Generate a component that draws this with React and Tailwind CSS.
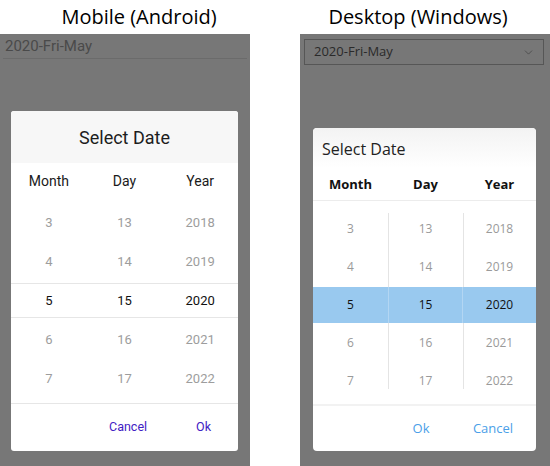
import { ChevronDown } from 'lucide-react';

const rows = [
  { m: 3, d: 13, y: 2018 },
  { m: 4, d: 14, y: 2019 },
  { m: 5, d: 15, y: 2020, sel: true },
  { m: 6, d: 16, y: 2021 },
  { m: 7, d: 17, y: 2022 },
];

function AndroidPicker() {
  return (
    <div className="mx-[11px] mt-[52px] w-[227px] h-[340px] bg-white rounded-[3px] overflow-hidden flex flex-col font-['Roboto',sans-serif]">
      <div className="h-[52px] bg-[#f7f7f7] flex items-center justify-center text-[18px] text-[#1d1d1d]">
        Select Date
      </div>
      <div className="grid grid-cols-3 h-[40px] pb-[4px] items-center text-center text-[14px] text-[#1a1a1a]">
        <span>Month</span>
        <span>Day</span>
        <span>Year</span>
      </div>
      <div className="flex flex-col">
        {rows.map((r) =>
          r.sel ? (
            <div key={r.m} className="my-[2px] h-[35px] grid grid-cols-3 items-center text-center text-[13px] text-[#111] border-y border-[#e6e6e6]">
              <span>{r.m}</span>
              <span>{r.d}</span>
              <span>{r.y}</span>
            </div>
          ) : (
            <div key={r.m} className="h-[39px] grid grid-cols-3 items-center text-center text-[13px] text-[#9d9d9d]">
              <span>{r.m}</span>
              <span>{r.d}</span>
              <span>{r.y}</span>
            </div>
          )
        )}
      </div>
      <div className="mt-[5px] border-t border-[#e6e6e6] flex-1 flex items-center justify-end pr-[27px] gap-[49px] text-[12.5px] text-[#3f22c4]">
        <span>Cancel</span>
        <span>Ok</span>
      </div>
    </div>
  );
}

function WindowsPicker() {
  return (
    <div className="ml-[13px] mt-[63px] w-[223px] h-[323px] bg-white rounded-[4px] overflow-hidden flex flex-col font-['Open_Sans',sans-serif]">
      <div className="h-[40px] bg-gradient-to-b from-[#f3f3f3] to-white flex items-end pl-[9px] pb-[7px] text-[16px] text-[#222]">
        Select Date
      </div>
      <div className="grid grid-cols-[75px_75px_1fr] h-[33px] pt-[2px] items-center text-center text-[13px] font-bold text-[#111] border-b border-[#ececec]">
        <span>Month</span>
        <span>Day</span>
        <span>Year</span>
      </div>
      <div className="relative mt-[9px] flex flex-col">
        <div className="absolute left-[75px] top-[3px] bottom-[11px] w-px bg-[#e4e4e4]" />
        <div className="absolute left-[150px] top-[3px] bottom-[11px] w-px bg-[#e4e4e4]" />
        {rows.map((r) => (
          <div
            key={r.m}
            className={
              r.sel
                ? 'relative h-[36px] my-[1px] grid grid-cols-[75px_75px_1fr] items-center text-center text-[12px] text-[#111] bg-[#99c9ef]'
                : 'h-[38px] grid grid-cols-[75px_75px_1fr] items-center text-center text-[12px] text-[#9a9a9a]'
            }
          >
            <span>{r.m}</span>
            <span className={r.sel ? 'h-full flex items-center justify-center border-x border-[#b3d6f3]' : ''}>{r.d}</span>
            <span>{r.y}</span>
          </div>
        ))}
      </div>
      <div className="mt-[4px] border-t-2 border-[#f2f2f2] flex-1 flex items-center justify-end pr-[7px] text-[13px] text-[#4aa0e8]">
        <span className="w-[72px] text-center">Ok</span>
        <span className="w-[72px] text-center">Cancel</span>
      </div>
    </div>
  );
}

export default function App() {
  return (
    <div className="w-[550px] h-[466px] bg-white flex gap-[50px] overflow-hidden">
      {/* Mobile */}
      <div className="w-[250px] flex flex-col">
        <div className="h-[34px] pl-[28px] flex items-center justify-center text-[20px] text-black font-['Open_Sans',sans-serif]">
          Mobile (Android)
        </div>
        <div className="flex-1 bg-[#777777] flex flex-col">
          <div className="mx-[3px] h-[25px] border-b border-[#6b6b6b] flex items-center pl-[2px] text-[15px] text-[#4a4a4a] font-['Roboto',sans-serif]">
            2020-Fri-May
          </div>
          <AndroidPicker />
        </div>
      </div>

      {/* Desktop */}
      <div className="w-[250px] flex flex-col">
        <div className="h-[34px] pr-[14px] flex items-center justify-center text-[20px] text-black font-['Open_Sans',sans-serif]">
          Desktop (Windows)
        </div>
        <div className="flex-1 bg-[#777777] flex flex-col">
          <div className="mt-[5px] ml-[4px] w-[240px] h-[26px] border border-[#565656] flex items-center justify-between pl-[9px] pr-[8px] text-[13px] text-[#2a2a2a] font-['Open_Sans',sans-serif]">
            <span>2020-Fri-May</span>
            <ChevronDown className="w-[13px] h-[13px] text-[#2f2f2f]" strokeWidth={1} />
          </div>
          <WindowsPicker />
        </div>
      </div>
    </div>
  );
}
